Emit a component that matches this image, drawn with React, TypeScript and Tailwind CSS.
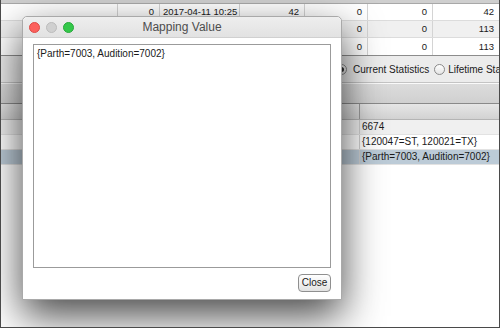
import React from 'react';

const font = { fontFamily: '"Liberation Sans", Arial, sans-serif' };

// rows 2 and 3 sit mostly under the dialog, only the right-hand columns show
const topRows = [
  { bg: 'bg-white', cells: ['', '0', '2017-04-11 10:25', '42', '0', '0', '42'] },
  { bg: 'bg-[#f0f0f0]', cells: ['', '', '', '', '0', '0', '113'] },
  { bg: 'bg-white', cells: ['', '', '', '', '0', '0', '113'] },
];

const bottomRows = [
  { bg: 'bg-[#f0f0f0]', value: '6674' },
  { bg: 'bg-white', value: '{120047=ST, 120021=TX}' },
  { bg: 'bg-[#bccbd7]', value: '{Parth=7003, Audition=7002}' },
];

const Radio: React.FC<{ checked?: boolean }> = ({ checked }) => (
  <span className="w-[11px] h-[11px] rounded-full border border-[#8a8a8a] bg-gradient-to-b from-white to-[#e4e4e4] flex items-center justify-center shrink-0">
    {checked && <span className="w-[5px] h-[5px] rounded-full bg-[#333]" />}
  </span>
);

const App: React.FC = () => {
  return (
    <div
      className="relative w-[500px] h-[328px] overflow-hidden bg-white border-l border-r border-b border-[#4a4a4a] text-[10px] text-[#1a1a1a] flex flex-col"
      style={font}
    >
      {/* background window */}
      <div className="h-[4px] shrink-0 bg-[#cfcfcf] border-b border-[#a8a8a8]" />
      <div className="shrink-0 border-b border-[#8c8c8c] text-[9.5px]">
        {topRows.map((row, i) => (
          <div
            key={i}
            className={`grid grid-cols-[117px_42px_80px_65px_63px_65px_1fr] h-[17px] border-b border-[#dcdcdc] last:border-b-0 ${row.bg}`}
          >
            {row.cells.map((c, j) => (
              <div
                key={j}
                className={`border-r border-[#d4d4d4] last:border-r-0 flex items-center leading-none whitespace-nowrap overflow-hidden ${
                  j === 2 ? 'justify-start pl-[3px]' : 'justify-end pr-[5px]'
                }`}
              >
                {c}
              </div>
            ))}
          </div>
        ))}
      </div>

      <div className="shrink-0 bg-[#ececec]">
        <div className="h-[26px] flex items-center pl-[335px] overflow-hidden whitespace-nowrap">
          <Radio checked />
          <span className="ml-[6px]">Current Statistics</span>
          <span className="ml-[5px]">
            <Radio />
          </span>
          <span className="ml-[3px]">Lifetime Statistics</span>
        </div>
        <div className="h-[1px] bg-[#c4c4c4]" />
        <div className="h-[1px] bg-[#fafafa]" />
        <div className="h-[20px] bg-gradient-to-b from-[#dcdcdc] to-[#d0d0d0] border-b border-[#8a8a8a]" />
      </div>

      <div className="shrink-0">
        <div className="grid grid-cols-[359px_1fr] h-[16px] bg-gradient-to-b from-[#e6e6e6] to-[#d2d2d2] border-b border-[#b4b4b4]">
          <div className="border-r border-[#9a9a9a]" />
          <div />
        </div>
        {bottomRows.map((row, i) => (
          <div key={i} className={`grid grid-cols-[359px_1fr] h-[15px] border-b border-[#e2e2e2] ${row.bg}`}>
            <div className="border-r border-[#d0d0d0]" />
            <div className="flex items-center pl-[2px] leading-none whitespace-nowrap">{row.value}</div>
          </div>
        ))}
      </div>
      <div className="flex-1 bg-white" />

      {/* dialog */}
      <div className="absolute left-[21px] top-[16px] w-[320px] h-[284px] bg-white border border-[#a9a9a9] rounded-t-[5px] shadow-[0_16px_40px_rgba(0,0,0,0.72)] flex flex-col">
        <div className="h-[21px] shrink-0 rounded-t-[5px] bg-gradient-to-b from-[#eeeeee] to-[#e2e2e2] border-b border-[#d0d0d0] flex items-center relative">
          <div className="flex items-center gap-[6px] pl-[6px]">
            <span className="w-[11px] h-[11px] rounded-full bg-[#fc605c] border border-[#de4a46]" />
            <span className="w-[11px] h-[11px] rounded-full bg-[#d0d0d0] border border-[#bcbcbc]" />
            <span className="w-[11px] h-[11px] rounded-full bg-[#34c84a] border border-[#28a93b]" />
          </div>
          <span className="absolute inset-0 flex items-center justify-center text-[12px] text-[#4d4d4d]">
            Mapping Value
          </span>
        </div>
        <div className="flex-1 flex flex-col px-[10px] pt-[6px] pb-[8px]">
          <div className="h-[224px] border border-[#9b9b9b] bg-white px-[3px] pt-[2px] leading-[13px] text-[10px] text-[#1a1a1a]">
            {'{Parth=7003, Audition=7002}'}
          </div>
          <div className="flex justify-end mt-[6px]">
            <button className="w-[33px] h-[18px] rounded-[4px] border border-[#8f8f8f] bg-gradient-to-b from-white to-[#e2e2e2] text-[10px] text-[#1a1a1a] leading-none">
              Close
            </button>
          </div>
        </div>
      </div>
    </div>
  );
};

export default App;
